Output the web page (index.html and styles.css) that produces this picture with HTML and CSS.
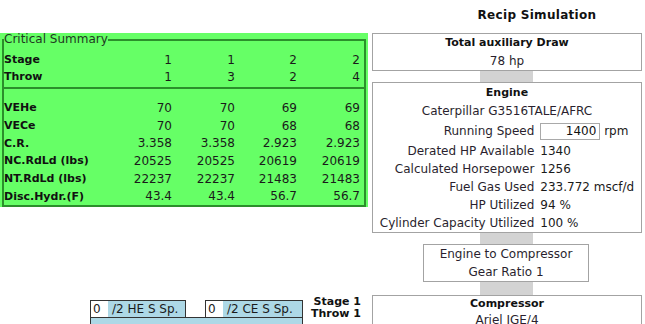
FILE: index.html
```html
<!DOCTYPE html>
<html>
<head>
<meta charset="utf-8">
<title>Recip Simulation</title>
<link rel="stylesheet" href="styles.css">
</head>
<body>
<div class="page">
  <div class="left">
    <div class="summary">
      <fieldset class="crit">
        <legend>Critical Summary</legend>
        <table class="crit-table">
          <colgroup><col class="c-lbl"><col class="c-v"><col class="c-v"><col class="c-v2"><col class="c-v"></colgroup>
          <tr class="r-top"><th>Stage</th><td>1</td><td>1</td><td>2</td><td>2</td></tr>
          <tr class="r-top"><th>Throw</th><td>1</td><td>3</td><td>2</td><td>4</td></tr>
          <tr class="r-sep"><td colspan="5"><div class="rule"></div></td></tr>
          <tr><th>VEHe</th><td>70</td><td>70</td><td>69</td><td>69</td></tr>
          <tr><th>VECe</th><td>70</td><td>70</td><td>68</td><td>68</td></tr>
          <tr><th>C.R.</th><td>3.358</td><td>3.358</td><td>2.923</td><td>2.923</td></tr>
          <tr><th>NC.RdLd (lbs)</th><td>20525</td><td>20525</td><td>20619</td><td>20619</td></tr>
          <tr><th>NT.RdLd (lbs)</th><td>22237</td><td>22237</td><td>21483</td><td>21483</td></tr>
          <tr><th>Disc.Hydr.(F)</th><td>43.4</td><td>43.4</td><td>56.7</td><td>56.7</td></tr>
        </table>
      </fieldset>
    </div>
    <div class="cyl-area">
      <div class="cyl">
        <div class="spaces">
          <div class="sp"><input class="sp-in" type="text" value="0"><span class="sp-txt">/2 HE S Sp.</span></div>
          <div class="sp sp-ce"><input class="sp-in" type="text" value="0"><span class="sp-txt">/2 CE S Sp.</span></div>
        </div>
        <div class="cyl-body"></div>
      </div>
      <div class="stage-lbl">Stage 1<br>Throw 1</div>
    </div>
  </div>
  <div class="right">
    <div class="title">Recip Simulation</div>
    <div class="box box-aux">
      <div class="b-title">Total auxiliary Draw</div>
      <div class="b-line">78 hp</div>
    </div>
    <div class="link link-a"></div>
    <div class="box box-engine">
      <div class="b-title">Engine</div>
      <div class="b-line">Caterpillar G3516TALE/AFRC</div>
      <table class="eng-table">
        <tr class="r-input"><td class="k">Running Speed</td><td class="v"><input class="rpm" type="text" value="1400"> rpm</td></tr>
        <tr><td class="k">Derated HP Available</td><td class="v">1340</td></tr>
        <tr><td class="k">Calculated Horsepower</td><td class="v">1256</td></tr>
        <tr><td class="k">Fuel Gas Used</td><td class="v">233.772 mscf/d</td></tr>
        <tr><td class="k">HP Utilized</td><td class="v">94 %</td></tr>
        <tr><td class="k">Cylinder Capacity Utilized</td><td class="v">100 %</td></tr>
      </table>
    </div>
    <div class="link link-b"></div>
    <div class="box box-gear">
      <div class="b-line">Engine to Compressor</div>
      <div class="b-line">Gear Ratio 1</div>
    </div>
    <div class="link link-c"></div>
    <div class="box box-comp">
      <div class="b-title">Compressor</div>
      <div class="b-line">Ariel JGE/4</div>
    </div>
  </div>
  <div class="edge"></div>
</div>
</body>
</html>
```

FILE: styles.css
```css
html, body {
  margin: 0;
  padding: 0;
  overflow: hidden;
  background: #ffffff;
}
body {
  font-family: "DejaVu Sans", Verdana, sans-serif;
  font-size: 12px;
  color: #1a1a1a;
}
.page {
  display: grid;
  grid-template-columns: 368px 270px 10px;
  column-gap: 4px;
  align-items: start;
}

/* ---------- left column ---------- */
.left {
  display: flex;
  flex-direction: column;
  padding-top: 33px;
}
.summary {
  background: #66ff66;
  padding: 0 2px 3px 2px;
  height: 174px;
  box-sizing: border-box;
}
.crit {
  margin: 0;
  padding: 0;
  border: 2px solid #2b8f2b;
  min-width: 0;
}
.crit legend {
  padding: 0;
  margin: 0;
  font-size: 12px;
  line-height: 13px;
  color: #1f3a1f;
}
.crit-table {
  table-layout: fixed;
  width: 360px;
  border-collapse: collapse;
  border-spacing: 0;
  margin-top: 5px;
}
.c-lbl { width: 109px; }
.c-v { width: 63px; }
.c-v2 { width: 62px; }
.crit-table th {
  text-align: left;
  font-size: 11px;
  font-weight: bold;
  color: #111;
  padding: 0;
  white-space: nowrap;
}
.crit-table td {
  text-align: right;
  padding: 0 4px 0 0;
  color: #1a1a1a;
}
.crit-table tr { height: 17.7px; }
.crit-table tr.r-top { height: 17px; }
.crit-table tr.r-sep { height: auto; }
.crit-table tr.r-sep td { padding: 0; }
.rule {
  height: 2px;
  background: #2b8f2b;
  margin: 2px 0 10px 0;
}

.cyl-area {
  display: flex;
  margin-top: 89px;
  padding-right: 7px;
}
.cyl {
  margin-left: 90px;
  margin-top: 4px;
  width: 213px;
}
.spaces {
  display: flex;
  justify-content: space-between;
}
.sp {
  display: flex;
  align-items: center;
  width: 96px;
  height: 17px;
  box-sizing: border-box;
  border: 1px solid #333333;
  border-bottom: none;
  background: #add8e6;
}
.sp-ce { width: 98px; }
.sp-in {
  width: 17px;
  height: 16px;
  box-sizing: border-box;
  border: none;
  margin: 0;
  padding: 0 0 0 2px;
  font: inherit;
  color: #1a1a1a;
  background: #ffffff;
  align-self: stretch;
}
.sp-txt {
  margin-left: 4px;
  white-space: nowrap;
}
.cyl-body {
  height: 30px;
  border: 1px solid #333333;
  background: #add8e6;
}
.stage-lbl {
  margin-left: auto;
  font-weight: bold;
  line-height: 12px;
  text-align: right;
  font-size: 11px;
  color: #111;
}

/* ---------- right column ---------- */
.right {
  display: flex;
  flex-direction: column;
  align-items: stretch;
}
.title {
  height: 33px;
  line-height: 30px;
  font-size: 12px;
  font-weight: bold;
  letter-spacing: 0.3px;
  text-align: center;
  padding-left: 60px;
  color: #111;
}
.box {
  border: 1px solid #a3a3a3;
  background: #ffffff;
  text-align: center;
  color: #2a1f2e;
}
.b-title {
  font-size: 11px;
  font-weight: bold;
  line-height: 18px;
  color: #111;
}
.b-line {
  line-height: 18px;
  white-space: nowrap;
}
.link {
  width: 53px;
  background: #d3d3d3;
  margin-left: 108px;
}
.link-a { height: 11px; }
.link-b { height: 11px; }
.link-c { height: 13px; }
.box-engine { padding-top: 1px; }
.box-gear {
  width: 166px;
  box-sizing: border-box;
  margin-left: 51px;
}
.box-comp { height: 60px; }
.box-comp .b-title { line-height: 16px; }
.box-comp .b-line { line-height: 16px; }
.eng-table {
  border-collapse: collapse;
  margin: 0 auto;
}
.eng-table td {
  padding: 0;
  height: 18px;
  white-space: nowrap;
}
.eng-table td.k {
  text-align: right;
  padding-right: 6px;
}
.eng-table td.v {
  text-align: left;
  color: #1a1a1a;
}
.eng-table tr.r-input td { height: 22px; }
.rpm {
  width: 60px;
  height: 17px;
  box-sizing: border-box;
  border: 1px solid #a9a9a9;
  margin: 0;
  padding: 0 3px 0 0;
  font: inherit;
  text-align: right;
  color: #111;
  vertical-align: middle;
}
.edge {
  margin-top: 82px;
  height: 110px;
  border-left: 2px dotted #f0a030;
}
```
